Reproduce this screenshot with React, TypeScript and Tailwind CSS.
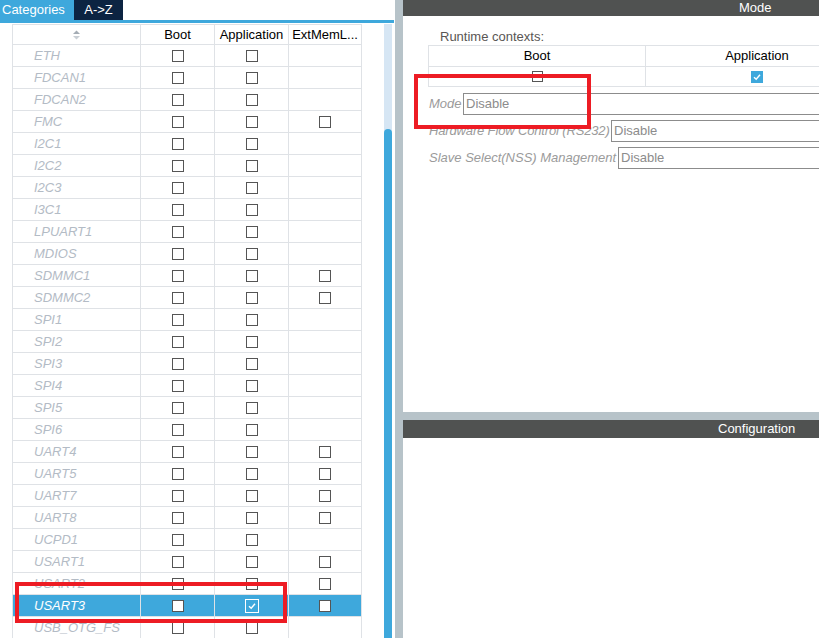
import React from "react";

const rows: [string, boolean][] = [
  ["ETH", false],
  ["FDCAN1", false],
  ["FDCAN2", false],
  ["FMC", true],
  ["I2C1", false],
  ["I2C2", false],
  ["I2C3", false],
  ["I3C1", false],
  ["LPUART1", false],
  ["MDIOS", false],
  ["SDMMC1", true],
  ["SDMMC2", true],
  ["SPI1", false],
  ["SPI2", false],
  ["SPI3", false],
  ["SPI4", false],
  ["SPI5", false],
  ["SPI6", false],
  ["UART4", true],
  ["UART5", true],
  ["UART7", true],
  ["UART8", true],
  ["UCPD1", false],
  ["USART1", true],
  ["USART2", true],
  ["USART3", true],
  ["USB_OTG_FS", false],
];

function Box({ checked = false }: { checked?: boolean }) {
  if (checked) {
    return (
      <span className="flex h-[14px] w-[14px] items-center justify-center border border-white bg-[#3ea8dc]">
        <svg width="10" height="10" viewBox="0 0 10 10">
          <path d="M2 5.2 L4.2 7.3 L8 2.8" stroke="white" strokeWidth="1.4" fill="none" />
        </svg>
      </span>
    );
  }
  return <span className="block h-[12px] w-[12px] border border-[#555] bg-white" />;
}

const formRows = [
  { label: "Mode", w: "w-[34px]", track: "" },
  { label: "Hardware Flow Control (RS232)", w: "w-[182px]", track: "tracking-[-0.15px]" },
  { label: "Slave Select(NSS) Management", w: "w-[189px]", track: "" },
];

export default function App() {
  return (
    <div
      className="relative flex h-[638px] w-[819px] overflow-hidden bg-white text-[13px]"
      style={{ fontFamily: '"Liberation Sans", Arial, sans-serif' }}
    >
      {/* Left panel */}
      <div className="flex w-[395px] shrink-0 flex-col">
        <div className="flex h-[20px] shrink-0">
          <div className="flex w-[74px] items-center bg-[#3ea8dc] pl-[2px] text-white">Categories</div>
          <div className="flex w-[49px] items-center justify-center bg-[#0c2442] text-white">A-&gt;Z</div>
        </div>
        <div className="h-[3px] w-[394px] shrink-0 bg-[#3ea8dc]" />
        <div className="flex min-h-0 flex-1">
          <div className="ml-[12px] mt-[1px] w-[350px] shrink-0 border-l border-t border-[#dfe2e6]">
            <div className="flex h-[20px] border-b border-[#dfe2e6] text-black">
              <div className="flex w-[128px] items-center justify-center border-r border-[#dfe2e6]">
                <svg width="9" height="10" viewBox="0 0 9 10">
                  <path d="M4.5 0.5 L8 4 L1 4 Z" fill="#a4acb4" />
                  <path d="M4.5 9.5 L8 6 L1 6 Z" fill="#c8ced4" />
                </svg>
              </div>
              <div className="flex w-[74px] items-center justify-center border-r border-[#dfe2e6]">Boot</div>
              <div className="flex w-[74px] items-center justify-center border-r border-[#dfe2e6]">Application</div>
              <div className="flex w-[73px] items-center justify-center border-r border-[#dfe2e6]">ExtMemL...</div>
            </div>
            {rows.map(([name, ext]) => {
              const sel = name === "USART3";
              return (
                <div
                  key={name}
                  className={`flex h-[22px] border-b border-[#dfe2e6] ${sel ? "bg-[#3ea8dc]" : ""}`}
                >
                  <div
                    className={`flex w-[128px] items-center border-r border-[#dfe2e6] pl-[21px] italic ${
                      sel ? "text-white" : "text-[#b3bbc5]"
                    }`}
                  >
                    {name}
                  </div>
                  <div className="flex w-[74px] items-center justify-center border-r border-[#dfe2e6]">
                    <Box />
                  </div>
                  <div className="flex w-[74px] items-center justify-center border-r border-[#dfe2e6]">
                    <Box checked={sel} />
                  </div>
                  <div className="flex w-[73px] items-center justify-center border-r border-[#dfe2e6]">
                    {ext && <Box />}
                  </div>
                </div>
              );
            })}
          </div>
          <div className="ml-[22px] mt-[1px] flex w-[8px] shrink-0 flex-col bg-[#d6e6f4]">
            <div className="h-[105px] shrink-0" />
            <div className="flex-1 rounded-t-full bg-[#3ea8dc]" />
          </div>
        </div>
      </div>

      {/* Separator */}
      <div className="w-[8px] shrink-0 bg-[#b7c3c9]" />

      {/* Right panel */}
      <div className="flex min-w-0 flex-1 flex-col">
        <div className="flex h-[16px] shrink-0 items-center bg-[#505251] pl-[336px] text-white">Mode</div>
        <div className="flex h-[396px] shrink-0 flex-col">
          <div className="ml-[37px] mt-[13px] leading-[16px] text-[#595654]">Runtime contexts:</div>
          <div className="ml-[25px] w-[440px] shrink-0 border-l border-t border-[#dfe2e6]">
            <div className="flex h-[21px] border-b border-[#dfe2e6] text-black">
              <div className="flex w-[217px] items-center justify-center border-r border-[#dfe2e6]">Boot</div>
              <div className="flex flex-1 items-center justify-center">Application</div>
            </div>
            <div className="flex h-[20px] border-b border-[#dfe2e6]">
              <div className="flex w-[217px] items-center justify-center border-r border-[#dfe2e6]">
                <span className="block h-[11px] w-[11px] border border-[#555]" />
              </div>
              <div className="flex flex-1 items-center justify-center">
                <span className="flex h-[12px] w-[12px] items-center justify-center bg-[#3ea8dc]">
                  <svg width="10" height="10" viewBox="0 0 10 10">
                    <path d="M2 5.2 L4.2 7.3 L8 2.8" stroke="white" strokeWidth="1.4" fill="none" />
                  </svg>
                </span>
              </div>
            </div>
          </div>
          <div className="ml-[26px] mr-[-20px] mt-[6px] flex flex-col gap-[5px]">
            {formRows.map((r) => (
              <div key={r.label} className="flex h-[22px] items-center">
                <span className={`shrink-0 whitespace-nowrap italic text-[#9b9b9b] ${r.w} ${r.track}`}>
                  {r.label}
                </span>
                <div className="flex h-[22px] flex-1 items-center border border-[#8c8c8c] pl-[2px] text-[#8c8c8c]">
                  Disable
                </div>
              </div>
            ))}
          </div>
        </div>
        <div className="h-[8px] shrink-0 bg-[#b7c3c9]" />
        <div className="flex h-[18px] shrink-0 items-center bg-[#505251] pl-[315px] text-white">Configuration</div>
        <div className="flex-1" />
      </div>

      {/* Annotation rectangles */}
      <div className="absolute left-[15px] top-[582px] h-[41px] w-[272px] border-4 border-[#ed1c24]" />
      <div className="absolute left-[414px] top-[74px] h-[55px] w-[177px] border-4 border-[#ed1c24]" />
    </div>
  );
}
